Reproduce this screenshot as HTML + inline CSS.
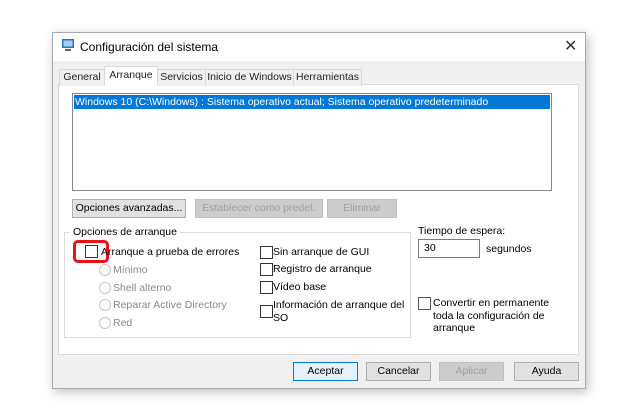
<!DOCTYPE html>
<html><head><meta charset="utf-8"><style>
*{box-sizing:border-box;margin:0;padding:0}
body{width:640px;height:414px;background:#fff;position:relative;font-family:"Liberation Sans",sans-serif;font-size:10.5px;color:#000;overflow:hidden}
.a{position:absolute;white-space:nowrap}
.win{left:52px;top:32px;width:534px;height:357px;background:#f0f0f0;border:1px solid #aaa;box-shadow:2px 3px 10px rgba(0,0,0,.25)}
.title{left:0;top:0;width:532px;height:28px;background:#fff}
.tab{top:36px;height:17px;border:1px solid #d9d9d9;border-bottom:none;background:#f0f0f0;text-align:center;line-height:15px;color:#222}
.panel{left:5px;top:51px;width:521px;height:271px;background:#fff;border:1px solid #d9d9d9}
.btn{height:19px;border:1px solid #adadad;background:#e1e1e1;text-align:center;line-height:17px}
.dis{color:#a0a0a0;background:#ccc;border-color:#bfbfbf}
.cb{width:13px;height:13px;border:1px solid #333;background:#fff}
.rd{width:12px;height:12px;border:1px solid #c5c5c5;border-radius:50%;background:#fff}
.g{color:#888}
</style></head><body>
<div class="a win">
 <div class="a title">
  <svg class="a" style="left:8px;top:5px" width="14" height="14" viewBox="0 0 14 14"><rect x="1" y="1" width="12" height="9" fill="#2a6fc0"/><rect x="2.5" y="2.5" width="9" height="6" fill="#9fd0f5"/><rect x="4" y="11" width="6" height="2" fill="#666"/></svg>
  <div class="a" style="left:27px;top:7px;font-size:12px">Configuración del sistema</div>
  <div class="a" style="left:511px;top:3px;font-size:16px;color:#333">✕</div>
 </div>
 <div class="a panel"></div>
 <div class="a tab" style="left:6px;width:46px">General</div>
 <div class="a tab" style="left:104px;width:49px">Servicios</div>
 <div class="a tab" style="left:152px;width:89px">Inicio de Windows</div>
 <div class="a tab" style="left:240px;width:69px">Herramientas</div>
 <div class="a tab" style="left:51px;top:33px;width:54px;height:20px;background:#fff;line-height:17px">Arranque</div>
 <div class="a" style="left:19px;top:60px;width:480px;height:98px;background:#fff;border:1px solid #828790"></div>
 <div class="a" style="left:21px;top:62px;width:476px;height:14px;background:#0078d7;color:#fff;line-height:14px;padding-left:1px">Windows 10 (C:\Windows) : Sistema operativo actual; Sistema operativo predeterminado</div>
 <div class="a btn" style="left:19px;top:166px;width:114px">Opciones avanzadas...</div>
 <div class="a btn dis" style="left:142px;top:166px;width:128px">Establecer como predet.</div>
 <div class="a btn dis" style="left:274px;top:166px;width:70px">Eliminar</div>
 <div class="a" style="left:11px;top:199px;width:347px;height:106px;border:1px solid #dcdcdc"></div>
 <div class="a" style="left:17px;top:193px;background:#fff;padding:0 3px">Opciones de arranque</div>
 <div class="a cb" style="left:32px;top:212px"></div>
 <div class="a" style="left:20px;top:207px;width:36px;height:23px;border:3px solid #e8101a;border-radius:5px"></div>
 <div class="a" style="left:48px;top:213px">Arranque a prueba de errores</div>
 <div class="a rd" style="left:46px;top:231px"></div><div class="a g" style="left:60px;top:231px">Mínimo</div>
 <div class="a rd" style="left:46px;top:249px"></div><div class="a g" style="left:60px;top:249px">Shell alterno</div>
 <div class="a rd" style="left:46px;top:266px"></div><div class="a g" style="left:60px;top:266px">Reparar Active Directory</div>
 <div class="a rd" style="left:46px;top:284px"></div><div class="a g" style="left:60px;top:284px">Red</div>
 <div class="a cb" style="left:207px;top:213px"></div><div class="a" style="left:220px;top:213px">Sin arranque de GUI</div>
 <div class="a cb" style="left:207px;top:230px"></div><div class="a" style="left:220px;top:230px">Registro de arranque</div>
 <div class="a cb" style="left:207px;top:248px"></div><div class="a" style="left:220px;top:248px">Vídeo base</div>
 <div class="a cb" style="left:207px;top:272px"></div><div class="a" style="left:220px;top:266px;line-height:13px">Información de arranque del<br>SO</div>
 <div class="a" style="left:365px;top:192px">Tiempo de espera:</div>
 <div class="a" style="left:365px;top:206px;width:62px;height:19px;background:#fff;border:1px solid #7a7a7a;padding:2px 5px">30</div>
 <div class="a" style="left:433px;top:210px">segundos</div>
 <div class="a cb" style="left:365px;top:264px;border-color:#555"></div>
 <div class="a" style="left:380px;top:264px;line-height:12.5px">Convertir en permanente<br>toda la configuración de<br>arranque</div>
 <div class="a btn" style="left:240px;top:329px;width:65px;border:1px solid #0078d7;background:#e5f1fb">Aceptar</div>
 <div class="a btn" style="left:313px;top:329px;width:65px">Cancelar</div>
 <div class="a btn dis" style="left:386px;top:329px;width:65px">Aplicar</div>
 <div class="a btn" style="left:461px;top:329px;width:65px">Ayuda</div>
</div>
</body></html>
